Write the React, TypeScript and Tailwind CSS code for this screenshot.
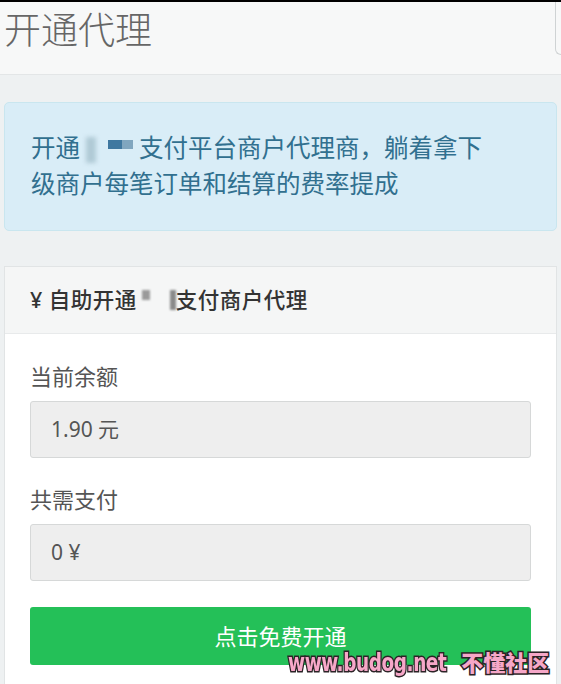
import React from 'react'

const font = { fontFamily: '"Noto Sans", "Noto Sans CJK SC", sans-serif' }

function Field({ label, value }: { label: string; value: string }) {
  return (
    <div>
      <p className="text-[22px] leading-[32px] text-[#555]">{label}</p>
      <div className="mt-[9px] flex h-[57px] items-center rounded-[3px] border border-[#d6d8d8] bg-[#eeeeee] px-[20px] text-[21px] text-[#555]">
        {value}
      </div>
    </div>
  )
}

export default function App() {
  return (
    <div className="relative min-h-[684px] w-[561px] overflow-hidden bg-[#eef1f2]" style={font}>
      <div className="h-[2px] bg-black" />
      <header className="flex h-[73px] items-start justify-between border-b border-[#e3e6e7] bg-[#f7f8f8]">
        <h1 className="pl-[4px] pt-[3px] text-[37px] font-light leading-[50px] text-[#666]">开通代理</h1>
        <div className="h-[53px] w-[6px] rounded-bl-[6px] border-b border-l border-[#cfd3d4] bg-[#f7f8f8]" />
      </header>

      <div className="mx-[4px] mt-[27px] h-[129px] rounded-[5px] border border-[#c9e6ef] bg-[#d9edf7] px-[26px] pt-[27px] text-[24.5px] leading-[36px] text-[#31708f]">
        开通
        <span className="ml-[6px] inline-block h-[26px] w-[10px] align-middle bg-[#b0cad6] blur-[2px]" />
        <span className="ml-[12px] inline-block h-[9px] w-[14px] align-[8px] bg-[#3f78a0] blur-[0.6px]" />
        <span className="mr-[6px] inline-block h-[9px] w-[11px] align-[8px] bg-[#80a6bf] blur-[0.6px]" />
        支付平台商户代理商，躺着拿下
        <br />
        级商户每笔订单和结算的费率提成
      </div>

      <section className="mx-[4px] mt-[35px] border border-[#e1e4e5] bg-white">
        <div className="flex h-[67px] items-center border-b border-[#e8eaeb] bg-[#f5f6f6] px-[25px] text-[21.5px] font-medium tracking-[0.5px] text-[#333]">
          <span className="mr-[6px]">¥</span>
          自助开通
          <span className="ml-[5px] mb-[10px] h-[10px] w-[8px] bg-[#9a9a9a] blur-[0.8px]" />
          <span className="ml-[20px] h-[20px] w-[6px] bg-[#8a8a8a] blur-[1px]" />
          支付商户代理
        </div>
        <div className="px-[25px] pt-[26px] pb-[24px]">
          <Field label="当前余额" value="1.90 元" />
          <div className="mt-[25px]">
            <Field label="共需支付" value="0 ¥" />
          </div>
          <button className="mt-[26px] flex h-[58px] w-full items-center justify-center rounded-[3px] bg-[#24c058] text-[22px] text-white">
            点击免费开通
          </button>
        </div>
      </section>

      <div
        className="absolute left-[288px] top-[644px] flex items-baseline text-[25px] font-black text-[#f6a7c8] [paint-order:stroke] [-webkit-text-stroke:3px_#2b2326]"
        style={{ fontFamily: '"DejaVu Sans Condensed", "Liberation Sans Narrow", "Noto Sans CJK SC", sans-serif' }}
      >
        <span className="inline-block origin-left scale-x-[0.82] tracking-[-0.5px]">www.budog.net</span>
        <span className="-ml-[20px] text-[22px]" style={{ fontFamily: '"Noto Sans CJK SC", sans-serif' }}>不懂社区</span>
      </div>
    </div>
  )
}
